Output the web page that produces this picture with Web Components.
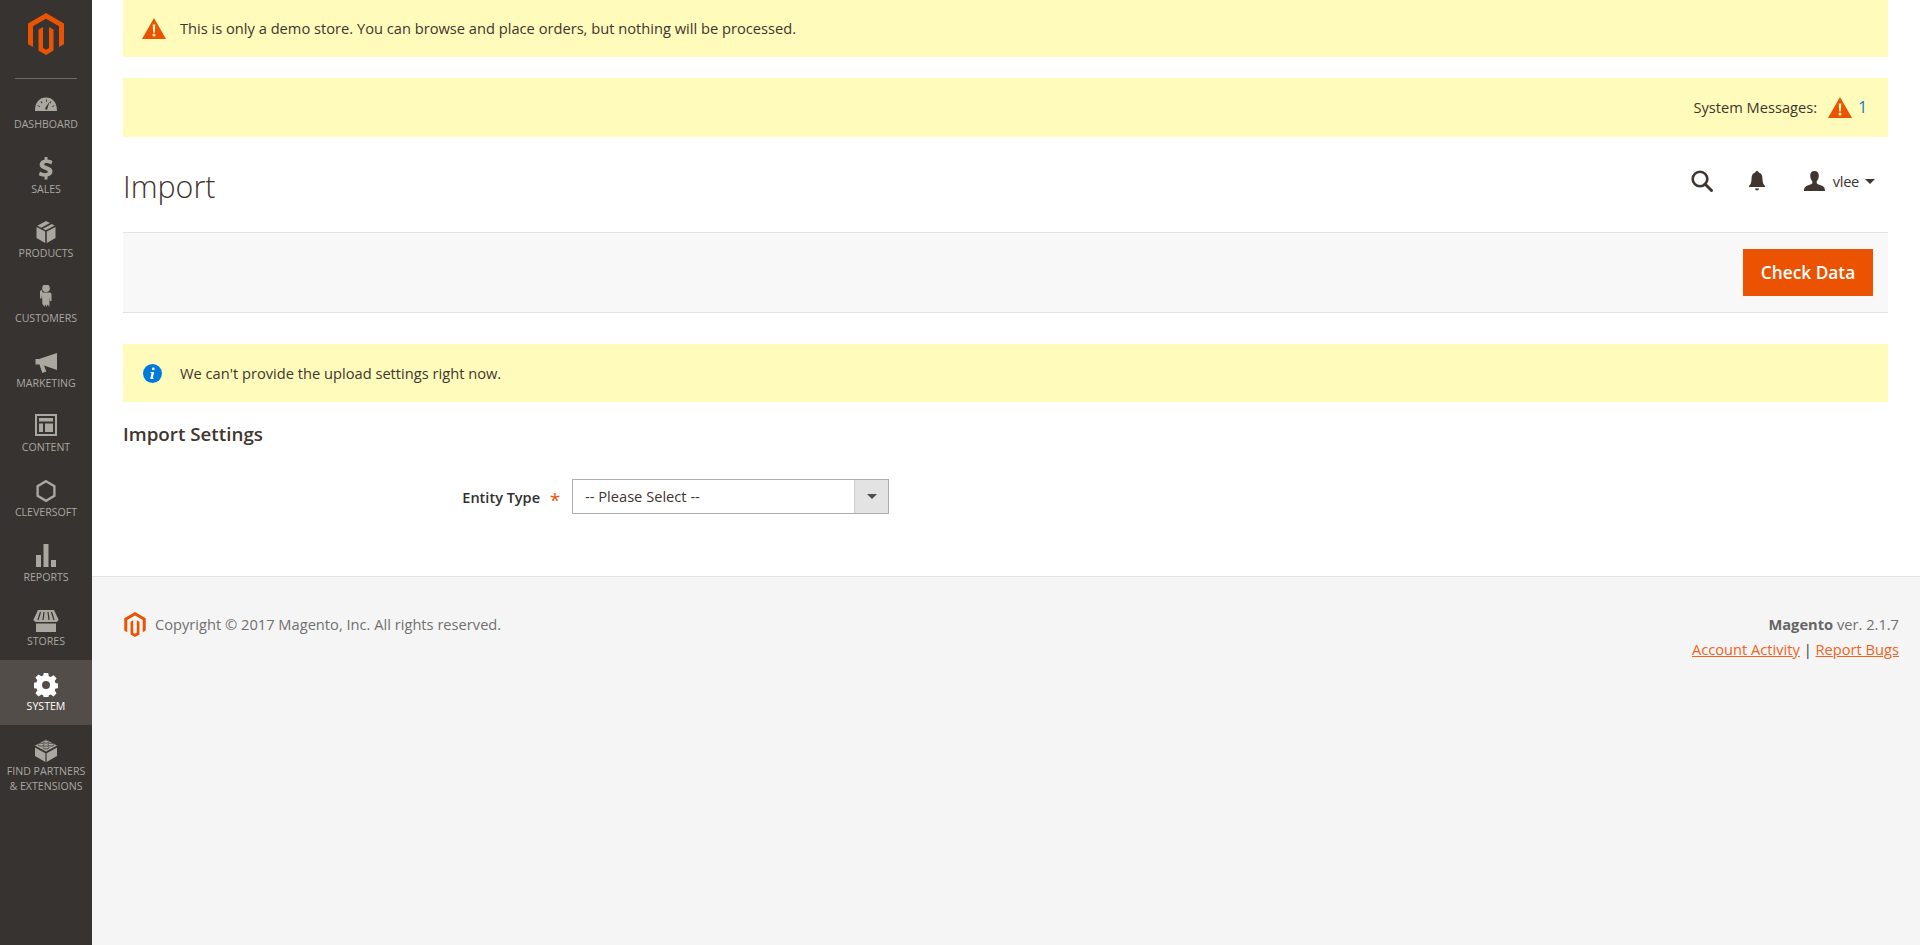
<!DOCTYPE html>
<html>
<head>
<meta charset="utf-8">
<title>Import</title>
<style>
    html, body { margin: 0; height: 100%; }
    body { font-family: 'Open Sans', sans-serif; color: #41362f; font-size: 14.66px; background: #fff; }
</style>
</head>
<body>
<admin-page>
    <admin-sidebar slot="sidebar">
        <nav-item label="Dashboard"><svg viewBox="0 0 24 24" width="24" height="24"><path fill-rule="evenodd" d="M1 20C1 11 5.500 6.500 12 6.500S23 11 23 20H1ZM12 8.500v2.500h.8V8.500ZM6.500 10.500l1.300 2 .7-.4-1.300-2ZM3.500 15l2.200 1 .3-.7-2.200-1ZM17.500 10.500l-1.300 2-.7-.4 1.300-2ZM20.500 15l-2.200 1-.3-.7 2.200-1ZM15.500 10.800l-4.400 6.400a1.500 1.500 0 0 0 2 1.300Z"/></svg></nav-item>
        <nav-item label="Sales"><svg viewBox="0 0 24 24" width="24" height="24"><path d="M10.500 1h3v2.600c2 .2 3.700.8 5 1.500l-1.200 3.400c-1.500-.8-3.300-1.400-5-1.400-1.400 0-2.100.5-2.100 1.200 0 .8 1 1.200 3.100 1.900 3.400 1.100 5.200 2.600 5.200 5.300 0 2.500-1.800 4.500-5 5v3h-3v-2.800c-2.200-.1-4.300-.8-5.700-1.700l1.200-3.500c1.600 1 3.600 1.700 5.400 1.700 1.500 0 2.400-.6 2.400-1.400 0-.9-.9-1.400-3-2.100-3.200-1-5.200-2.500-5.200-5.100 0-2.500 1.800-4.400 4.900-4.900Z"/></svg></nav-item>
        <nav-item label="Products"><svg viewBox="0 0 24 24" width="24" height="24"><path d="M12 1l4 2.100-8.700 4.700-4-2.100ZM17.800 4l3 1.600-9 4.700-3-1.600ZM2.500 7l8.700 4.600V23l-8.700-5ZM21.500 7v11l-8.700 5V11.600Z"/></svg></nav-item>
        <nav-item label="Customers"><svg viewBox="0 2 24 24" width="24" height="24"><circle cx="12" cy="5.200" r="3.800"/><path d="M8.500 9.500h7c1.300 0 2 1 2 2.200v6.300l-1.500 0-.5-4-.1 10-1.700-2.500-1.200 2.500-1.200-2.500-1.200 2.500-1-2.500-.7 0-.4-10-.5 4-1.500 0v-6.300c0-1.200.7-2.200 2-2.200Z"/></svg></nav-item>
        <nav-item label="Marketing"><svg viewBox="0 0 24 24" width="24" height="24"><path d="M23 3v17L10 15.500l2.300 6-4 1.500-2.800-8.400H1.500v-5.600H5Z"/></svg></nav-item>
        <nav-item label="Content"><svg viewBox="0 1 24 24" width="24" height="24"><path fill-rule="evenodd" d="M1 1h22v22H1ZM3 3v18h18V3ZM5 5h14v3.500H5ZM5 10.500h4V19H5ZM11 10.500h8V19h-8Z"/></svg></nav-item>
        <nav-item label="Cleversoft"><svg viewBox="0 0 24 24" width="24" height="24"><path fill="none" stroke="currentColor" stroke-width="2.400" d="M12 2.200l8.400 4.900v9.800L12 21.800l-8.400-4.900V7.100Z"/></svg></nav-item>
        <nav-item label="Reports"><svg viewBox="0 0 24 24" width="24" height="24"><path d="M2 11h5v12H2ZM9.500 0h5v23h-5ZM17 16h5v7h-5Z"/></svg></nav-item>
        <nav-item label="Stores"><svg viewBox="0 -1 26 24" width="26" height="24"><path d="M5 1h16l4.500 9.500c0 1.600-1.300 2.500-2.500 2.500H3c-1.200 0-2.500-.9-2.500-2.500Z"/><path d="M3 14.500h20V23H3Z"/><path stroke="#373330" stroke-width="1.200" d="M7.500 3 5 11M11 3l-1 8M15 3l1 8M18.500 3 21 11"/></svg></nav-item>
        <nav-item label="System" active><svg viewBox="0 0 24 24" width="24" height="24"><path fill-rule="evenodd" d="M9.800 0h4.400l.6 3.300 1.900.8 2.800-1.900 3.100 3.100-1.900 2.800.8 1.900 3.300.6v4.400l-3.300.6-.8 1.900 1.900 2.800-3.100 3.100-2.800-1.900-1.900.8-.6 3.300H9.800l-.6-3.300-1.900-.8-2.800 1.900-3.100-3.100 1.900-2.800-.8-1.900-3.300-.6V9.800l3.300-.6.8-1.900-1.900-2.800 3.100-3.100 2.800 1.900 1.900-.8ZM12 8a4 4 0 1 0 0 8 4 4 0 0 0 0-8Z"/></svg></nav-item>
        <nav-item label="Find Partners&#10;&amp; Extensions"><svg viewBox="0 0 24 24" width="24" height="24"><path d="M12 1.500l11 6-11 6-11-6ZM1 9.500l10.400 5.700V24L1 18ZM23 9.500v8.500l-10.400 6v-8.800Z"/><g stroke="#373330" stroke-width=".8"><ellipse cx="12" cy="3.600" rx="3" ry="1.500"/><ellipse cx="7" cy="6.600" rx="3" ry="1.500"/><ellipse cx="17" cy="6.600" rx="3" ry="1.500"/><ellipse cx="12" cy="9.500" rx="3" ry="1.500"/></g></svg></nav-item>
    </admin-sidebar>

    <admin-message lift>
        <svg slot="icon" viewBox="0 0 24 21" width="24" height="21"><path fill="#eb5202" d="M12 0l12 21H0Z"/><path fill="#fffbbb" d="M10.700 6.500h2.600l-.5 8h-1.600ZM12 15.500a1.500 1.500 0 1 1 0 3 1.500 1.500 0 0 1 0-3Z"/></svg>
        This is only a demo store. You can browse and place orders, but nothing will be processed.
    </admin-message>
    <system-messages count="1"></system-messages>
    <page-header title="Import" user="vlee"></page-header>
    <page-toolbar><admin-button>Check Data</admin-button></page-toolbar>
    <admin-message spaced>
        <svg slot="icon" viewBox="1.500 0 24 21" width="24" height="21"><circle cx="12" cy="10.500" r="9.500" fill="#007bdb"/><path fill="#fff" d="M12.800 4.500a1.400 1.400 0 1 1 0 2.800 1.400 1.400 0 0 1 0-2.800ZM10 9h3.700l-1.300 5.600c-.1.500.3.500 1.100.1l-.2.800c-1.500.9-3.600.9-3.400-.6L11 10c-.4-.1-.7-.1-1.100-.1Z"/></svg>
        We can't provide the upload settings right now.
    </admin-message>
    <import-form heading="Import Settings" label="Entity Type" placeholder="-- Please Select --"></import-form>
    <admin-footer slot="footer" version="2.1.7"></admin-footer>
</admin-page>

<script>
const MAGENTO_MARK = `<path d="M18 0 36 10.400V31.200L31 34V13.300L18 5.800 5 13.300V34L0 31.200V10.400Z"/><path d="M18 42 10.500 37.600V16.500L15 13.900V35L18 36.700 21 35V13.900L25.500 16.500V37.600Z"/>`;

class AdminPage extends HTMLElement {
    constructor() {
        super();
        this.attachShadow({ mode: "open" });
        this.shadowRoot.innerHTML = `
        <style>
            :host { display: flex; min-height: 945px; align-items: stretch; }
            .side { flex: 0 0 92px; display: flex; }
            .main { flex: 1; display: flex; flex-direction: column; min-width: 0; }
            .content { padding: 0 32px 0 31px; }
            .foot { flex: 1; display: flex; }
        </style>
        <div class="side"><slot name="sidebar"></slot></div>
        <div class="main">
            <div class="content"><slot></slot></div>
            <div class="foot"><slot name="footer"></slot></div>
        </div>`;
    }
}

class AdminSidebar extends HTMLElement {
    constructor() {
        super();
        this.attachShadow({ mode: "open" });
        this.shadowRoot.innerHTML = `
        <style>
            :host { display: block; width: 92px; background: #373330; }
            .logo { display: flex; justify-content: center; padding-top: 13px; height: 78px; box-sizing: border-box; }
            .logo svg { fill: #eb5202; }
            .rule { height: 1px; margin: 0 15px; background: #736963; }
            nav { margin-top: -1px; }
        </style>
        <div class="logo"><svg viewBox="0 0 36 42" width="36" height="42">${MAGENTO_MARK}</svg></div>
        <div class="rule"></div>
        <nav><slot></slot></nav>`;
    }
}

class NavItem extends HTMLElement {
    constructor() {
        super();
        this.attachShadow({ mode: "open" });
        this.shadowRoot.innerHTML = `
        <style>
            :host { display: flex; flex-direction: column; align-items: center; height: 64.67px; padding-top: 13px; box-sizing: border-box;
                    color: #aaa6a0; text-align: center; }
            :host([active]) { background: #524d49; color: #fff; }
            .icon { height: 24px; display: flex; align-items: center; justify-content: center; fill: currentColor; }
            ::slotted(svg) { fill: currentColor; display: block; }
            .label { margin-top: 2px; font-size: 10.6px; line-height: 15px; text-transform: uppercase; width: 92px; white-space: pre-line; }
        </style>
        <div class="icon"><slot></slot></div>
        <div class="label"></div>`;
    }
    connectedCallback() {
        this.shadowRoot.querySelector(".label").textContent = this.getAttribute("label");
    }
}

class AdminMessage extends HTMLElement {
    constructor() {
        super();
        this.attachShadow({ mode: "open" });
        this.shadowRoot.innerHTML = `
        <style>
            :host { display: flex; align-items: center; height: 57px; margin-bottom: 21px; padding-left: 19px; background: #fffbbb; color: #41362f; font-size: 14.66px; }
            :host([spaced]) { height: 58px; margin: 31px 0 0; }
            :host([lift]) .text { padding-bottom: 2px; }
            .icon { width: 24px; height: 21px; margin-right: 14px; }
        </style>
        <div class="icon"><slot name="icon"></slot></div>
        <div class="text"><slot></slot></div>`;
    }
}

class SystemMessages extends HTMLElement {
    constructor() {
        super();
        this.attachShadow({ mode: "open" });
        this.shadowRoot.innerHTML = `
        <style>
            :host { display: flex; align-items: center; justify-content: flex-end; height: 59px; padding-right: 21px; background: #fffbbb; font-size: 14.66px; }
            span { padding-bottom: 2px; }
            svg { margin: 0 6px 0 11px; }
            a { color: #007bdb; text-decoration: none; font-size: 15.5px; padding-bottom: 2px; }
        </style>
        <span>System Messages:</span>
        <svg viewBox="0 0 24 21" width="24" height="21"><path fill="#eb5202" d="M12 0l12 21H0Z"/><path fill="#fffbbb" d="M10.700 6.500h2.600l-.5 8h-1.600ZM12 15.500a1.500 1.500 0 1 1 0 3 1.500 1.500 0 0 1 0-3Z"/></svg>
        <a href="#"></a>`;
    }
    connectedCallback() {
        this.shadowRoot.querySelector("a").textContent = this.getAttribute("count");
    }
}

class PageHeader extends HTMLElement {
    constructor() {
        super();
        this.attachShadow({ mode: "open" });
        this.shadowRoot.innerHTML = `
        <style>
            :host { display: flex; height: 95px; align-items: flex-start; justify-content: space-between; }
            h1 { margin: 32px 0 0; font-size: 30.4px; line-height: 36px; font-weight: 300; color: #41362f; }
            .actions { display: flex; align-items: center; margin: 33px 13px 0 0; fill: #41362f; }
            .search { margin-right: 36px; }
            .bell { margin-right: 39px; }
            .user { margin-right: 8px; }
            .name { font-size: 14.66px; margin-right: 6px; letter-spacing: -.3px; }
            .caret { width: 0; height: 0; border: 5px solid transparent; border-top: 5.500px solid #41362f; border-bottom: 0; }
        </style>
        <h1></h1>
        <div class="actions">
            <svg class="search" viewBox="0 0 22 22" width="22" height="22"><circle cx="9" cy="9" r="7.300" fill="none" stroke="#41362f" stroke-width="2.600"/><path d="M14 14l6.500 6.500" stroke="#41362f" stroke-width="3" stroke-linecap="round"/></svg>
            <svg class="bell" viewBox="0 0 16 20" width="16" height="20"><path d="M8 0c1 0 1.600.6 1.700 1.600C12.500 2.300 13.500 5 13.500 8c0 3.500.8 5.500 2.500 7v1H0v-1c1.700-1.500 2.500-3.500 2.500-7 0-3 1-5.700 3.800-6.400C6.400.6 7 0 8 0ZM6 17.500h4a2 2 0 0 1-4 0Z"/></svg>
            <svg class="user" viewBox="0 0 21 20" width="21" height="20"><path d="M10.500 0c2.800 0 4.300 2 4.300 4.800 0 2.300-1 4.500-2.100 5.500v1.400c0 1 1 1.500 3.400 2.300 3 1 4.900 2 4.900 6H0c0-4 1.900-5 4.900-6 2.400-.8 3.400-1.300 3.400-2.300v-1.400C7.200 9.300 6.200 7.100 6.200 4.800 6.200 2 7.700 0 10.500 0Z"/></svg>
            <span class="name"></span>
            <span class="caret"></span>
        </div>`;
    }
    connectedCallback() {
        this.shadowRoot.querySelector("h1").textContent = this.getAttribute("title");
        this.shadowRoot.querySelector(".name").textContent = this.getAttribute("user");
    }
}

class PageToolbar extends HTMLElement {
    constructor() {
        super();
        this.attachShadow({ mode: "open" });
        this.shadowRoot.innerHTML = `
        <style>
            :host { display: flex; justify-content: flex-end; align-items: center; height: 81px; box-sizing: border-box; padding-right: 15px;
                    background: #f8f8f8; border-top: 1px solid #e3e3e3; border-bottom: 1px solid #e3e3e3; }
        </style>
        <slot></slot>`;
    }
}

class AdminButton extends HTMLElement {
    constructor() {
        super();
        this.attachShadow({ mode: "open" });
        this.shadowRoot.innerHTML = `
        <style>
            :host { display: block; }
            button { display: block; width: 130px; height: 47px; padding: 0; border: 0; background: #eb5202; color: #fff;
                     font: 600 17.3px 'Open Sans', sans-serif; }
        </style>
        <button><slot></slot></button>`;
    }
}

class ImportForm extends HTMLElement {
    constructor() {
        super();
        this.attachShadow({ mode: "open" });
        this.shadowRoot.innerHTML = `
        <style>
            :host { display: block; height: 174px; box-sizing: border-box; padding-top: 19px; }
            h2 { margin: 0; font-size: 18.8px; line-height: 26px; font-weight: 600; color: #41362f; }
            .row { display: grid; grid-template-columns: 417px 32px 317px; align-items: center; margin-top: 32px; }
            label { text-align: right; font-weight: 600; font-size: 14.5px; color: #303030; padding-top: 2px; }
            .req { color: #eb5202; font-size: 19px; line-height: 14px; text-align: center; font-weight: 400; padding: 7px 2px 0 0; }
            .select { position: relative; height: 35px; }
            select { appearance: none; width: 100%; height: 100%; box-sizing: border-box; padding: 0 0 2px 12px; border: 1px solid #adadad; border-radius: 0; background: #fff;
                     font: 14.66px 'Open Sans', sans-serif; color: #41362f; }
            .arrow { position: absolute; top: 1px; right: 1px; bottom: 1px; width: 34px; background: #e3e3e3; border-left: 1px solid #d0d0d0; box-sizing: border-box; display: flex; align-items: center; justify-content: center; pointer-events: none; }
            .arrow i { width: 0; height: 0; border: 5px solid transparent; border-top: 5.500px solid #514943; border-bottom: 0; }
        </style>
        <h2></h2>
        <div class="row">
            <label></label>
            <span class="req">*</span>
            <div class="select"><select><option></option></select><span class="arrow"><i></i></span></div>
        </div>`;
    }
    connectedCallback() {
        this.shadowRoot.querySelector("h2").textContent = this.getAttribute("heading");
        this.shadowRoot.querySelector("label").textContent = this.getAttribute("label");
        this.shadowRoot.querySelector("option").textContent = this.getAttribute("placeholder");
    }
}

class AdminFooter extends HTMLElement {
    constructor() {
        super();
        this.attachShadow({ mode: "open" });
        this.shadowRoot.innerHTML = `
        <style>
            :host { display: flex; flex: 1; justify-content: space-between; align-items: flex-start; box-sizing: border-box;
                    background: #f5f5f5; border-top: 1px solid #e3e3e3; padding: 35px 21px 0 32px; font-size: 14.66px; color: #707070; }
            .copy { display: flex; align-items: center; gap: 9px; height: 25px; }
            .copy svg { fill: #eb5202; }
            .copy span { padding-bottom: 2px; }
            .meta { text-align: right; line-height: 25px; }
            strong { font-weight: 700; color: #666; }
            a { color: #f26322; }
            .sep { color: #41362f; }
        </style>
        <div class="copy"><svg viewBox="0 0 36 42" width="22" height="25">${MAGENTO_MARK}</svg><span>Copyright © 2017 Magento, Inc. All rights reserved.</span></div>
        <div class="meta">
            <div><strong>Magento</strong> ver. <span class="ver"></span></div>
            <div><a href="#">Account Activity</a> <span class="sep">|</span> <a href="#">Report Bugs</a></div>
        </div>`;
    }
    connectedCallback() {
        this.shadowRoot.querySelector(".ver").textContent = this.getAttribute("version");
    }
}

customElements.define("admin-page", AdminPage);
customElements.define("admin-sidebar", AdminSidebar);
customElements.define("nav-item", NavItem);
customElements.define("admin-message", AdminMessage);
customElements.define("system-messages", SystemMessages);
customElements.define("page-header", PageHeader);
customElements.define("page-toolbar", PageToolbar);
customElements.define("admin-button", AdminButton);
customElements.define("import-form", ImportForm);
customElements.define("admin-footer", AdminFooter);
</script>
</body>
</html>
